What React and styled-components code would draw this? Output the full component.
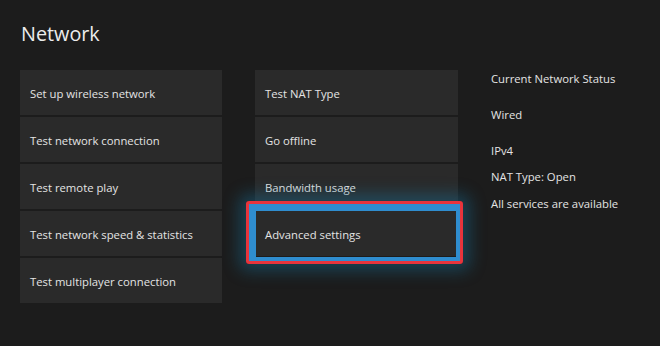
import React from "react";
import styled, { createGlobalStyle } from "styled-components";

const GlobalStyle = createGlobalStyle`
  html, body {
    margin: 0;
    padding: 0;
    background: #1c1c1c;
  }
  body {
    font-family: "Open Sans", "Noto Sans", sans-serif;
    color: #e4e4e4;
  }
`;

const leftItems = [
  "Set up wireless network",
  "Test network connection",
  "Test remote play",
  "Test network speed & statistics",
  "Test multiplayer connection",
];

const midItems = [
  { label: "Test NAT Type" },
  { label: "Go offline" },
  { label: "Bandwidth usage" },
  { label: "Advanced settings", focused: true },
];

const statusLines = [
  { text: "Current Network Status", top: 0 },
  { text: "Wired", top: 20 },
  { text: "IPv4", top: 20 },
  { text: "NAT Type: Open", top: 10 },
  { text: "All services are available", top: 11 },
];

function App() {
  return (
    <Page>
      <GlobalStyle />
      <Title>Network</Title>
      <Columns>
        <Column>
          {leftItems.map((t) => (
            <Tile key={t}>{t}</Tile>
          ))}
        </Column>
        <Column>
          {midItems.map((i) => (
            <Tile key={i.label}>
              {i.label}
              {i.focused && <Focus />}
            </Tile>
          ))}
        </Column>
        <Status>
          {statusLines.map((s) => (
            <StatusLine key={s.text} $top={s.top}>
              {s.text}
            </StatusLine>
          ))}
        </Status>
      </Columns>
    </Page>
  );
}

const Page = styled.div`
  width: 660px;
  height: 346px;
  box-sizing: border-box;
  padding: 20px 0 0 20px;
  background: #1c1c1c;
  overflow: hidden;
`;

const Title = styled.h1`
  margin: 0 0 0 1px;
  font-size: 19.8px;
  font-weight: 400;
  line-height: 28px;
  color: #ececec;
`;

const Columns = styled.div`
  display: grid;
  grid-template-columns: 202px 203px auto;
  column-gap: 33px;
  margin-top: 22px;
  align-items: start;
`;

const Column = styled.div`
  display: flex;
  flex-direction: column;
  gap: 2px;
`;

const Tile = styled.div`
  position: relative;
  height: 45px;
  box-sizing: border-box;
  display: flex;
  align-items: center;
  padding: 2px 0 0 10px;
  background: #2a2a2a;
  font-size: 11.3px;
  color: #e4e4e4;
`;

const Focus = styled.div`
  position: absolute;
  top: -10px;
  left: -9px;
  right: -5px;
  bottom: -8px;
  border: 3px solid #e8343c;
  border-radius: 3px;
  box-shadow: inset 7px 7px 0 #2f8dcf, inset -4px -4px 0 #2f8dcf,
    0 0 16px 7px rgba(25, 110, 150, 0.45);
  pointer-events: none;
`;

const Status = styled.div`
  display: flex;
  flex-direction: column;
  padding-top: 1px;
`;

const StatusLine = styled.div`
  margin-top: ${(p) => p.$top}px;
  font-size: 11.3px;
  line-height: 16px;
  color: #e4e4e4;
`;

export default App;
